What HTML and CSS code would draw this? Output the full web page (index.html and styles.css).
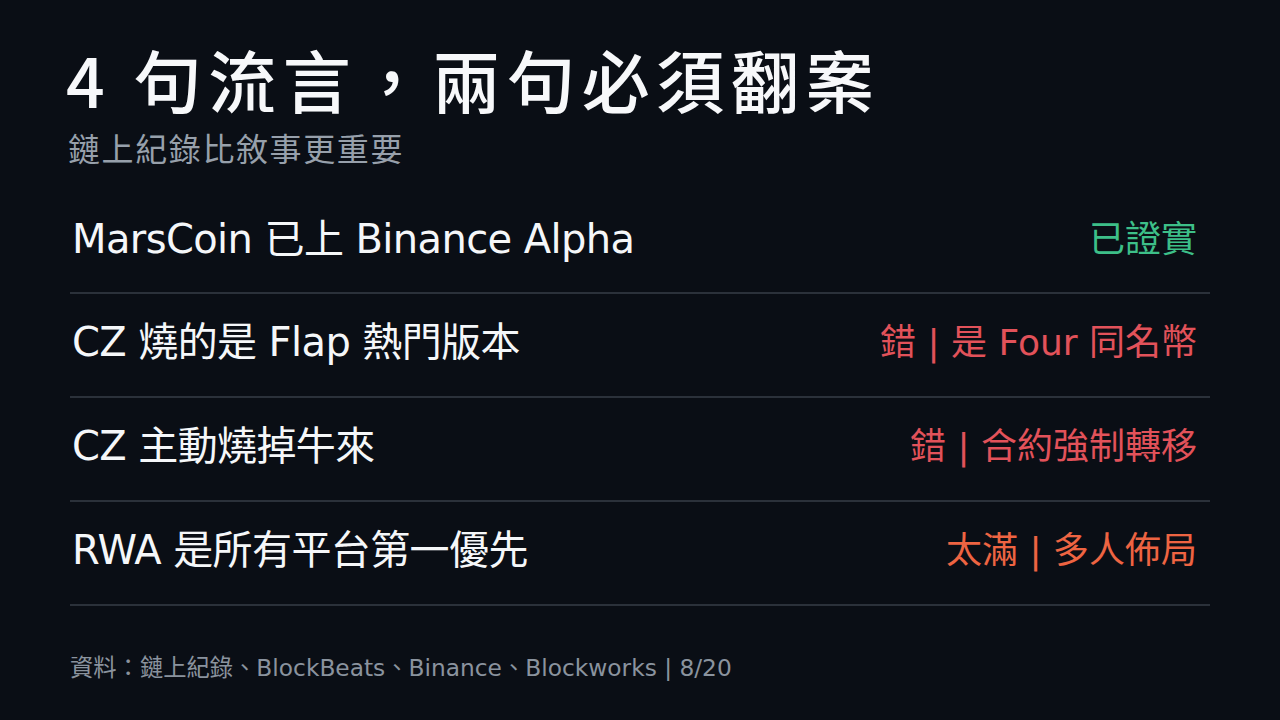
FILE: index.html
```html
<!DOCTYPE html>
<html lang="zh-Hant">
<head>
    <meta charset="UTF-8">
    <title>4 句流言，兩句必須翻案</title>
    <link rel="stylesheet" href="styles.css">
</head>
<body>

    <div class="l-slide">
        <header class="head">
            <h1 class="head__title">4 句流言，兩句必須翻案</h1>
            <p class="head__sub">鏈上紀錄比敘事更重要</p>
        </header>

        <ul class="claims">
            <li class="claim">
                <span class="claim__text">MarsCoin 已上 Binance Alpha</span>
                <span class="claim__verdict claim__verdict--ok">已證實</span>
            </li>
            <li class="claim">
                <span class="claim__text">CZ 燒的是 Flap 熱門版本</span>
                <span class="claim__verdict claim__verdict--wrong">錯 | 是 Four 同名幣</span>
            </li>
            <li class="claim">
                <span class="claim__text">CZ 主動燒掉牛來</span>
                <span class="claim__verdict claim__verdict--wrong">錯 | 合約強制轉移</span>
            </li>
            <li class="claim">
                <span class="claim__text">RWA 是所有平台第一優先</span>
                <span class="claim__verdict claim__verdict--much">太滿 | 多人佈局</span>
            </li>
        </ul>

        <footer class="l-footer">資料：鏈上紀錄、BlockBeats、Binance、Blockworks | 8/20</footer>
    </div>

</body>
</html>
```

FILE: styles.css
```css
BODY {
    margin: 0;
    background: #0a0e15;
    color: #f4f6f8;
    font-family: "DejaVu Sans", "Noto Sans CJK TC", sans-serif;
    }
.l-slide {
    width: 1280px;
    height: 720px;
    padding: 45px 70px 0 70px;
    box-sizing: border-box;
    }
.head__title {
    margin: 0 0 0 -4px;
    font-family: "Noto Sans CJK TC", sans-serif;
    font-size: 68px;
    font-weight: 500;
    line-height: 1;
    letter-spacing: 6.7px;
    color: #f7f8fa;
    }
.head__sub {
    margin: 21px 0 0 -2px;
    font-size: 32px;
    line-height: 1;
    letter-spacing: 1.6px;
    color: #97a0ab;
    }
.claims {
    margin: 26px 0 0 0;
    padding: 0;
    list-style: none;
    }
.claim {
    display: flex;
    align-items: center;
    justify-content: space-between;
    height: 102px;
    padding: 0 13px 12px 2px;
    box-sizing: border-box;
    border-bottom: 2px solid #2b313a;
    }
    .claim + .claim {
        height: 104px;
        }
.claim__text {
    font-size: 40px;
    letter-spacing: -0.6px;
    color: #f5f7f9;
    }
.claim__verdict {
    font-size: 36px;
    }
.claim__verdict--ok {
    color: #3dbf88;
    }
.claim__verdict--wrong {
    color: #e2525a;
    }
.claim__verdict--much {
    color: #ee6442;
    }
.l-footer {
    margin-top: 50px;
    font-size: 23.3px;
    line-height: 1;
    color: #8a939e;
    }
```
